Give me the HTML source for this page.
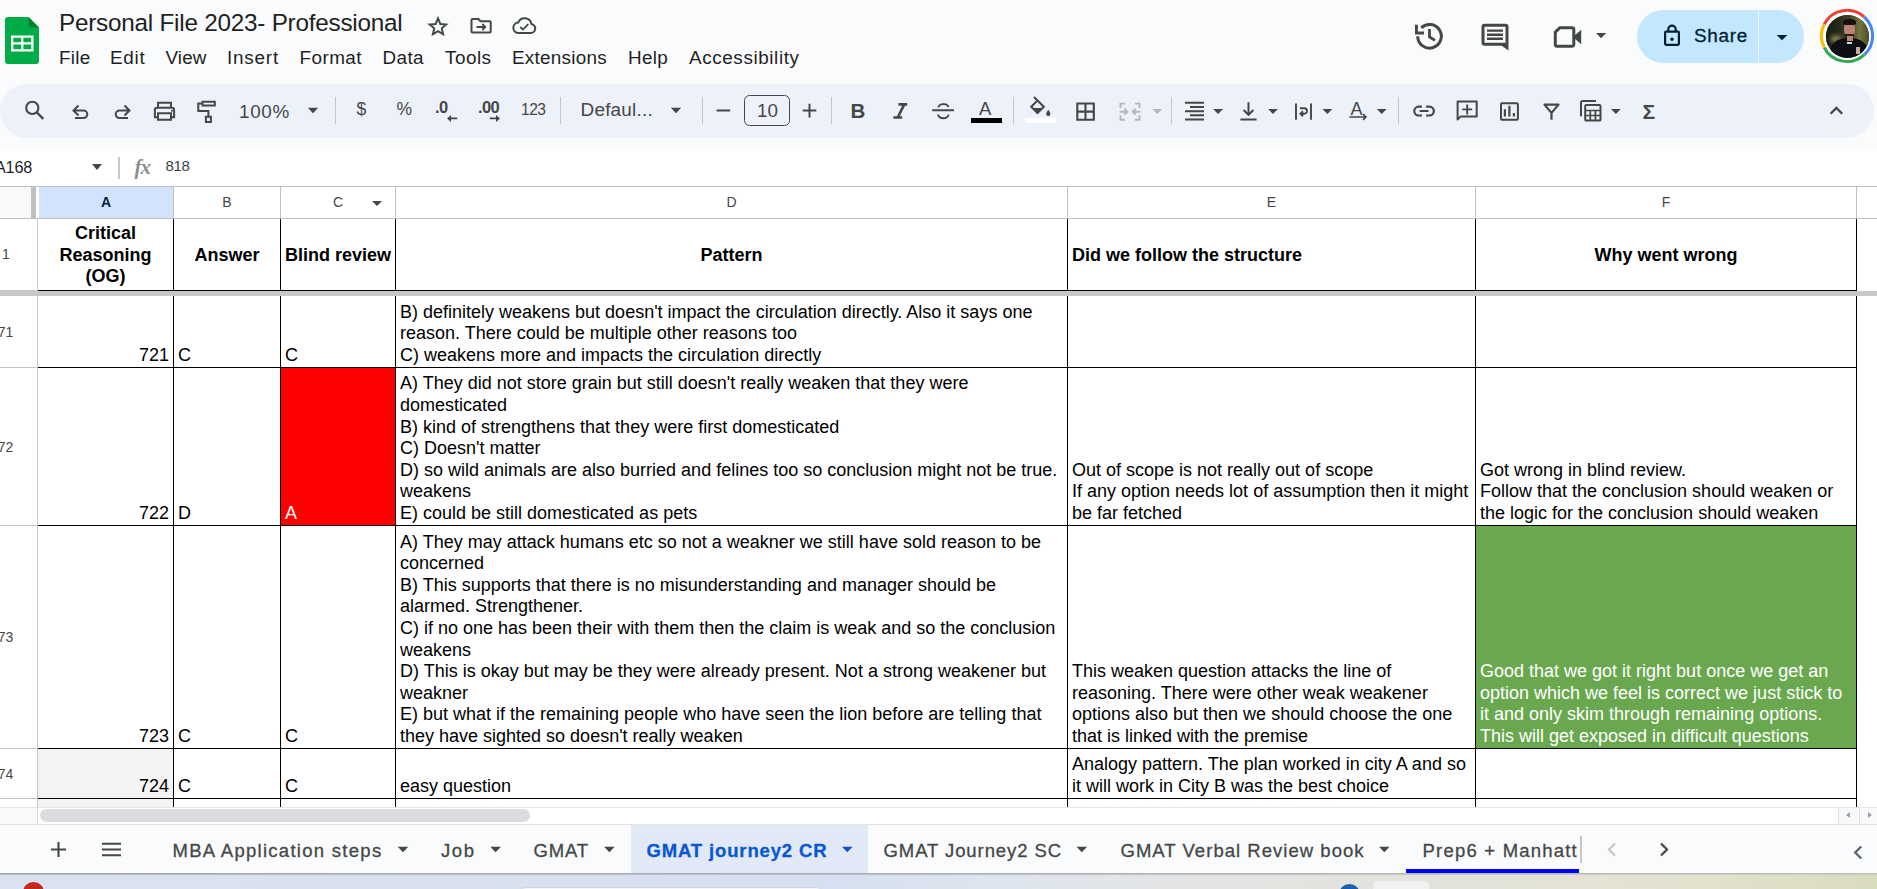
<!DOCTYPE html>
<html lang="en">
<head>
<meta charset="utf-8">
<title>Personal File 2023- Professional</title>
<style>
*{box-sizing:border-box}
html,body{margin:0;padding:0}
body{width:1877px;height:889px;overflow:hidden;position:relative;background:#f9fbfd;font-family:"Liberation Sans",sans-serif;color:#1f1f1f}
.abs{position:absolute}
.t{position:absolute;white-space:nowrap;line-height:1}
/* header */
#title{left:59px;top:9px;font-size:24.3px;letter-spacing:-.24px;color:#1f1f1f;line-height:28px}
.menu{top:47px;font-size:18.9px;line-height:22px;color:#1f1f1f}
svg.i{position:absolute;width:27px;height:27px;fill:#444746}
svg.s{position:absolute;fill:none;stroke:#444746}
/* toolbar */
#tb{left:0;top:84px;width:1874px;height:54px;border-radius:27px;background:#edf2fa}
.sep{position:absolute;top:97px;width:1px;height:27px;background:#c7c7c7}
.dd{position:absolute;width:0;height:0;border-left:5.5px solid transparent;border-right:5.5px solid transparent;border-top:6px solid #444746}
.tbt{color:#444746}
/* formula bar */
#fb{left:0;top:149px;width:1877px;height:37px;background:#fff}
/* grid */
#grid{left:0;width:1877px;overflow:visible}
.hl{position:absolute;height:1px;background:#000}
.vl{position:absolute;width:1px;background:#000}
.c{position:absolute;font-size:18px;line-height:21.6px;color:#000;white-space:pre;letter-spacing:0}
.ch{position:absolute;top:1px;height:31px;font-size:14px;line-height:30px;text-align:center;color:#444746;background:#fff}
.rh{position:absolute;left:0;font-size:14px;color:#444746;line-height:1;white-space:nowrap}
.hd{font-weight:bold;text-align:center}
/* tabs */
#tabs{left:0;top:826px;width:1877px;height:47px;background:#f9fbfd}
.tab{position:absolute;top:838.5px;font-size:18.5px;line-height:24px;color:#444746;white-space:nowrap;-webkit-text-stroke:.3px currentColor}
</style>
</head>
<body>

<!-- ===== HEADER ===== -->
<div id="hdr">
<svg class="abs" style="left:5px;top:17px" width="34" height="47" viewBox="0 0 34 47">
<path d="M3 0h20.5L34 10.5V44a3 3 0 0 1-3 3H3a3 3 0 0 1-3-3V3a3 3 0 0 1 3-3z" fill="#00ac47"/>
<path d="M23.5 0L34 10.5H26.500a3 3 0 0 1-3-3z" fill="#00832d"/>
<path fill="#fff" fill-rule="evenodd" d="M6 18.500h22.500v16H6zM8.300 20.800v4.500h7.800v-4.500zM18.400 20.800v4.500h7.800v-4.500zM8.300 27.600v4.600h7.800v-4.600zM18.400 27.600v4.600h7.800v-4.600z"/>
</svg>
<div class="t" id="title">Personal File 2023- Professional</div>
<div class="t menu" style="left:59px;letter-spacing:.26px">File</div>
<div class="t menu" style="left:110px;letter-spacing:.73px">Edit</div>
<div class="t menu" style="left:165.500px;letter-spacing:.1px">View</div>
<div class="t menu" style="left:227px;letter-spacing:.79px">Insert</div>
<div class="t menu" style="left:299.500px;letter-spacing:.45px">Format</div>
<div class="t menu" style="left:382.500px;letter-spacing:.4px">Data</div>
<div class="t menu" style="left:445px;letter-spacing:.48px">Tools</div>
<div class="t menu" style="left:512px;letter-spacing:.26px">Extensions</div>
<div class="t menu" style="left:628px;letter-spacing:.29px">Help</div>
<div class="t menu" style="left:689px;letter-spacing:.59px">Accessibility</div>
<!-- share pill -->
<div class="abs" style="left:1637px;top:10px;width:167px;height:53px;border-radius:26.500px;background:#c2e7ff"></div>
<div class="abs" style="left:1758px;top:10px;width:1px;height:53px;background:#eef7ff"></div>
<div class="t" style="left:1694px;top:24px;font-size:18.900px;line-height:24px;letter-spacing:.72px;color:#001d35;-webkit-text-stroke:.3px #001d35">Share</div>
<!-- avatar -->
<div class="abs" style="left:1826px;top:15px;width:43px;height:43px;border-radius:50%;overflow:hidden;background:#23281a">
<div class="abs" style="left:0;top:0;width:43px;height:30px;background:linear-gradient(90deg,#161a11 0,#262c1b 30%,#3f4226 55%,#76763f 78%,#4a4c2b 100%)"></div>
<div class="abs" style="left:4px;top:20px;width:12px;height:8px;border-radius:50%;background:#7d7a4a;filter:blur(2px)"></div>
<div class="abs" style="left:17.500px;top:6px;width:11.500px;height:15.500px;border-radius:45%;background:#b98478"></div>
<div class="abs" style="left:16.500px;top:3.500px;width:13.500px;height:6px;border-radius:50% 50% 25% 25%;background:#15110f"></div>
<div class="abs" style="left:19px;top:18.500px;width:8.500px;height:4px;border-radius:0 0 50% 50%;background:#2a1c18"></div>
<div class="abs" style="left:4px;top:22.500px;width:38px;height:30px;border-radius:45% 45% 0 0;background:#0e0e16"></div>
<div class="abs" style="left:20.500px;top:21px;width:6px;height:5px;background:#b98478"></div>
<div class="abs" style="left:21px;top:26.500px;width:5px;height:2.500px;background:#d8d8d8"></div>
<div class="abs" style="left:29.500px;top:32px;width:4px;height:6.500px;background:#c9a8a0"></div>
</div>
<svg class="abs" style="left:0;top:0" width="1877" height="84" viewBox="0 0 1877 84">
<g fill="none" stroke="#444746" stroke-width="2.200" stroke-linejoin="round">
<!-- star -->
<path transform="translate(438 26.300) scale(.9) translate(-438 -26.300)" d="M438 17.600l2.600 6.100 6.600.6-5 4.300 1.500 6.500-5.700-3.400-5.700 3.400 1.500-6.500-5-4.300 6.600-.6z" stroke-width="2.200" stroke-linejoin="miter"/>
<!-- folder move -->
<path d="M472.500 19h6l2 2.300h9.200a1 1 0 0 1 1 1v9.200a1 1 0 0 1-1 1h-17.200a1 1 0 0 1-1-1V20a1 1 0 0 1 1-1z" stroke-width="2"/>
<path d="M476.500 27h8.500M482.300 24l3 3-3 3" stroke-width="1.800" stroke-linejoin="miter"/>
<!-- cloud done -->
<path d="M518 33h12.800a4.500 4.500 0 0 0 .6-8.950 6.900 6.900 0 0 0-13.200-1.500A5.250 5.250 0 0 0 518 33z" stroke-width="2"/>
<path d="M520.300 27l2.600 2.600 5.400-5.400" stroke-width="1.800" stroke-linejoin="miter"/>
<!-- history -->
<path d="M1417.700 36.300a11.800 11.800 0 1 0 3.600-8.500" stroke-width="3"/>
<path d="M1429.500 29v8l5.500 3.400" stroke-width="2.800" stroke-linejoin="miter"/>
<!-- comment -->
<path d="M1484.500 25.300h21a1.500 1.500 0 0 1 1.500 1.500v17.500a0 0 0 0 1 0 0h-22.500a1.500 1.500 0 0 1-1.500-1.500v-16a1.500 1.500 0 0 1 1.500-1.500z" stroke-width="3"/>
<!-- video -->
<path d="M1560 27.700h12.200a1.600 1.600 0 0 1 1.600 1.600v15.300a1.600 1.600 0 0 1-1.600 1.600h-15.300a1.600 1.600 0 0 1-1.600-1.600V32.200z" stroke-width="3"/>
<!-- lock -->
<rect x="1665.100" y="31.600" width="13.800" height="13.200" rx="1" stroke="#001d35" stroke-width="2.200"/>
<path d="M1668.300 31.600v-2.200a3.700 3.700 0 0 1 7.400 0v2.200" stroke="#001d35" stroke-width="2.200"/>
</g>
<g fill="#444746">
<path d="M1415 24.700h2.900v6.900h6.100v2.900h-9z"/>
<path d="M1487 29.400h16v2.400h-16zM1487 33.500h16v2.400h-16zM1487 37.600h16v2.400h-16z"/>
<path d="M1500.500 45h8v5.500z"/>
<path d="M1574.500 35.500l6.700-5.700v14.400l-6.700-5.700z"/>
<path d="M1596 33h10.200l-5.100 5.200z"/>
<circle cx="1672" cy="39.200" r="1.700" fill="#001d35"/>
<path d="M1776.700 35h10.600l-5.300 5.200z" fill="#001d35"/>
</g>
<!-- avatar ring -->
<g fill="none" stroke-width="3">
<path d="M1824.2 24.2A25.6 25.6 0 0 1 1864.1 16.8" stroke="#ea4335"/>
<path d="M1864.1 16.8A25.6 25.6 0 0 1 1864.5 54.6" stroke="#4285f4"/>
<path d="M1864.5 54.6A25.6 25.6 0 0 1 1824.2 47.5" stroke="#34a853"/>
<path d="M1824.2 47.5A25.6 25.6 0 0 1 1824.2 24.2" stroke="#fbbc04"/>
</g>
</svg>
</div>

<!-- ===== TOOLBAR ===== -->
<div class="abs" id="tb"></div>
<div id="tbi">
<div class="sep" style="left:335px"></div>
<div class="sep" style="left:560px"></div>
<div class="sep" style="left:702px"></div>
<div class="sep" style="left:831px"></div>
<div class="sep" style="left:1013px"></div>
<div class="sep" style="left:1171px"></div>
<div class="sep" style="left:1398px"></div>
<div class="t tbt" style="left:239px;top:100px;font-size:18.900px;line-height:24px;letter-spacing:.67px">100%</div>
<div class="t tbt" style="left:356.500px;top:97px;font-size:17.500px;line-height:24px">$</div>
<div class="t tbt" style="left:396.500px;top:97px;font-size:17.500px;line-height:24px">%</div>
<div class="t tbt" style="left:435px;top:95px;font-size:16.500px;line-height:24px;font-weight:bold;letter-spacing:-.5px">.0</div>
<div class="t tbt" style="left:478px;top:95px;font-size:16.500px;line-height:24px;font-weight:bold;letter-spacing:-.6px">.00</div>
<div class="t tbt" style="left:521px;top:99px;font-size:15.600px;line-height:22px;letter-spacing:-.5px">123</div>
<div class="t tbt" style="left:580.500px;top:98px;font-size:18.900px;line-height:24px;letter-spacing:.24px">Defaul...</div>
<div class="abs" style="left:744px;top:95px;width:46px;height:31px;border:1.200px solid #444746;border-radius:5.500px"></div>
<div class="t tbt" style="left:757px;top:99px;font-size:18.900px;line-height:24px;color:#444746">10</div>
<div class="t tbt" style="left:850.500px;top:98px;font-size:20.500px;line-height:26px;font-weight:bold">B</div>
<div class="t tbt" style="left:979px;top:96.500px;font-size:18.500px;line-height:24px">A</div>
<div class="t tbt" style="left:1350.500px;top:97px;font-size:18px;line-height:24px">A</div>
<div class="t tbt" style="left:1642.500px;top:98.500px;font-size:21px;line-height:26px;font-weight:bold">&Sigma;</div>
<div class="abs" style="left:971px;top:118px;width:31px;height:5px;background:#000"></div>
<div class="abs" style="left:1025px;top:118px;width:31px;height:5px;background:#fff"></div>
<svg class="abs" style="left:0;top:84px" width="1877" height="54" viewBox="0 84 1877 54">
<g fill="none" stroke="#444746" stroke-width="2" stroke-linejoin="miter">
<!-- search -->
<circle cx="32.300" cy="107.900" r="6.100" stroke-width="2.100"/>
<path d="M36.700 112.300l6.600 6.600" stroke-width="2.300"/>
<!-- undo -->
<path d="M78.500 105.500l-5 5 5 5M74 110.500h9.500a3.800 3.800 0 0 1 0 7.600H75"/>
<!-- redo -->
<path d="M124.500 105.500l5 5-5 5M129 110.500h-9.500a3.800 3.800 0 0 0 0 7.600h8.500"/>
<!-- print -->
<path d="M158 107.500v-4.800h13v4.800M158 117.300h-3.100v-7.300a2.300 2.300 0 0 1 2.300-2.300h14.600a2.300 2.300 0 0 1 2.300 2.300v7.300h-3.100M158 113.300h13v6.500h-13z"/>
<!-- paint -->
<path d="M202.500 101.800h12.300v3.600h-12.300zM202.500 103.600h-4.200v7.300h10.100v5.500M205.900 116.800h5v5.200h-5z"/>
<!-- minus plus -->
<path d="M716.600 110.400h13.600M802.700 110.600h13.600M809.500 103.800v13.600"/>
<!-- italic -->
<path d="M898.500 104.400h8.700M893.400 117.500h8.700M904.300 104.400l-6.600 13.100" stroke-width="2.600"/>
<!-- strikethrough -->
<path d="M932.200 110.200h21.700M948.300 107.200a4.600 3.600 0 0 0-4.900-3.100 4.600 3.600 0 0 0-5 3.400M938.100 114.500a5.200 3.700 0 0 0 5.200 3.700 5.200 3.700 0 0 0 5.200-3.700" stroke-width="1.900"/>
<!-- fill bucket -->
<path d="M1034 97l9.800 9.800-6.300 6.300-6.300-6.300 6.300-6.300" stroke-width="2"/>
<!-- borders -->
<path d="M1077.300 103.500h16.500v16.300h-16.500zM1085.500 103.500v16.300M1077.300 111.600h16.500" stroke-width="2.100"/>
<!-- merge -->
<g stroke="#b4b7bc" stroke-width="1.900">
<path d="M1125 103.600h-4.500v4.500M1135 103.600h4.500v4.500M1125 119.800h-4.500v-4.500M1135 119.800h4.500v-4.500M1119.500 111.700h7.500M1124.300 108.800l3 2.900-3 2.900M1140.500 111.700h-7.500M1135.700 108.800l-3 2.900 3 2.900"/>
</g>
<!-- align right -->
<path d="M1185 102.700h19M1190 107h14M1185 111.200h19M1190 115.300h14M1185 119.500h19" stroke-width="1.900"/>
<!-- valign bottom -->
<path d="M1248.500 102.200v12.500M1243.600 110l4.900 4.900 4.900-4.900M1240.400 119.400h16.200"/>
<!-- wrap -->
<path d="M1296 103.600v16.200M1311 103.600v16.200M1300 108.300h4.300a2.700 2.700 0 0 1 0 5.400h-3.500M1303 111.200l-2.600 2.500 2.600 2.500" stroke-width="1.900"/>
<!-- rotate arrow -->
<path d="M1349.400 117h16M1363 114.200l2.900 2.800-2.900 2.800" stroke-width="1.700"/>
<!-- link -->
<path d="M1422 106.600h-3.300a4.450 4.450 0 0 0 0 8.900h3.300M1426.100 106.600h3.300a4.450 4.450 0 0 1 0 8.900h-3.300M1419.600 111h8.900" stroke-width="2.200"/>
<!-- comment plus -->
<path d="M1457.600 119.500v-18h19.100v15.100h-16.200z" stroke-linejoin="round"/>
<path d="M1462.200 109.400h10M1467.200 104.400v10" stroke-width="1.900"/>
<!-- chart -->
<rect x="1501" y="103.200" width="16.900" height="16.600" rx="1"/>
<path d="M1504.900 109.300v7.200M1509.400 105.700v10.800M1513.900 113v3.500" stroke-width="2.200"/>
<!-- filter -->
<path d="M1544.500 104.600h14l-7 8.300zM1551.500 111v8.800" stroke-width="2.200" stroke-linejoin="round"/>
<!-- table views -->
<path d="M1581 116.300v-13.600a1.600 1.600 0 0 1 1.600-1.600h13.400" />
<rect x="1585.200" y="104.900" width="15.300" height="15.700" rx="1.200"/>
<path d="M1585.200 110.500h15.300M1585.200 115.500h15.300M1590.300 110.500v10M1595.400 110.500v10" stroke-width="1.700"/>
<!-- chevron up -->
<path d="M1830.600 113.800l5.800-5.800 5.800 5.800" stroke-width="2.300"/>
</g>
<g fill="#444746">
<circle cx="172" cy="110.800" r="1"/>
<path d="M1032.400 108h10.300l-5.200 5.100z"/>
<path d="M1048.300 109.800c1.300 1.900 2.100 3.100 2.100 4.100a2.100 2.100 0 0 1-4.200 0c0-1 .8-2.200 2.100-4.100z"/>
<!-- dropdown arrows -->
<path d="M307.800 107.800h10.400l-5.200 5.400z"/>
<path d="M670.800 107.800h10.400l-5.200 5.400z"/>
<path d="M1152.400 109h9.800l-4.900 5z" fill="#b4b7bc"/>
<path d="M1213.200 109h9.800l-4.900 5z"/>
<path d="M1268.100 109h9.800l-4.900 5z"/>
<path d="M1322.500 109h9.800l-4.900 5z"/>
<path d="M1376.900 109h9.800l-4.900 5z"/>
<path d="M1611 109h9.800l-4.900 5z"/>
<!-- .0 arrows -->
<path d="M447 118.400l4-3.500v2.600h6.200v1.800h-6.200v2.600z"/>
<path d="M500 118.400l-4-3.500v2.600h-6.200v1.800h6.200v2.600z"/>
</g>
</svg>
</div>

<!-- ===== FORMULA BAR ===== -->
<div class="abs" id="fb"></div>
<div class="t" style="left:-5px;top:155.500px;font-size:16.200px;line-height:22px;letter-spacing:-.2px;color:#1f1f1f">A168</div>
<div class="dd" style="left:92.400px;top:164px;border-left-width:5px;border-right-width:5px;border-top-width:6px"></div>
<div class="abs" style="left:118px;top:157px;width:2px;height:21.500px;background:#c7c7c7"></div>
<div class="t" style="left:134.500px;top:154px;font-family:'Liberation Serif',serif;font-style:italic;font-size:21px;line-height:26px;color:#8c8f94;letter-spacing:-1px;font-weight:bold">fx</div>
<div class="t" style="left:165.500px;top:156px;font-size:15px;line-height:20px;letter-spacing:-.34px;color:#3c4043">818</div>

<!-- ===== GRID ===== -->
<div class="abs" id="grid" style="top:0;height:806px;background:none">
<div class="abs" style="left:0;top:186px;width:1877px;height:621px;background:#fff"></div>
<!-- column header -->
<div class="abs" style="left:0;top:187px;width:31px;height:31px;background:#f8f9fa"></div>
<div class="abs" style="left:31px;top:187px;width:5px;height:31px;background:#c0c0c0"></div>
<div class="ch" style="left:39px;top:187px;width:134px;background:#d3e3fd;color:#041e49;font-weight:bold">A</div>
<div class="ch" style="left:174px;top:187px;width:106px">B</div>
<div class="ch" style="left:281px;top:187px;width:114px">C</div>
<div class="ch" style="left:396px;top:187px;width:671px">D</div>
<div class="ch" style="left:1068px;top:187px;width:407px">E</div>
<div class="ch" style="left:1476px;top:187px;width:380px">F</div>
<div class="dd" style="left:371.5px;top:200.5px;border-left-width:5px;border-right-width:5px;border-top-width:5.5px"></div>
<div class="abs" style="left:0;top:186px;width:1877px;height:1px;background:#c0c0c0"></div>
<div class="abs" style="left:0;top:218px;width:1877px;height:1px;background:#c0c0c0"></div>
<div class="abs" style="left:173px;top:187px;width:1px;height:31px;background:#c0c0c0"></div>
<div class="abs" style="left:280px;top:187px;width:1px;height:31px;background:#c0c0c0"></div>
<div class="abs" style="left:395px;top:187px;width:1px;height:31px;background:#c0c0c0"></div>
<div class="abs" style="left:1067px;top:187px;width:1px;height:31px;background:#c0c0c0"></div>
<div class="abs" style="left:1475px;top:187px;width:1px;height:31px;background:#c0c0c0"></div>
<div class="abs" style="left:1856px;top:187px;width:1px;height:31px;background:#c0c0c0"></div>
<!-- row header -->
<div class="abs" style="left:37px;top:219px;width:1px;height:588px;background:#c4c4c4"></div>
<div class="abs" style="left:0;top:367px;width:37px;height:1px;background:#c4c4c4"></div>
<div class="abs" style="left:0;top:525px;width:37px;height:1px;background:#c4c4c4"></div>
<div class="abs" style="left:0;top:748px;width:37px;height:1px;background:#c4c4c4"></div>
<div class="abs" style="left:0;top:798px;width:37px;height:1px;background:#c4c4c4"></div>
<div class="rh" style="left:2px;top:247px">1</div>
<div class="rh" style="left:-10px;top:325px">171</div>
<div class="rh" style="left:-10px;top:440px">172</div>
<div class="rh" style="left:-10px;top:630px">173</div>
<div class="rh" style="left:-10px;top:767px">174</div>
<!-- fills -->
<div class="abs" style="left:281px;top:368px;width:114px;height:157px;background:#ff0000"></div>
<div class="abs" style="left:1476px;top:526px;width:380px;height:222px;background:#6aa84f"></div>
<div class="abs" style="left:38px;top:749px;width:135px;height:58px;background:#f3f3f3"></div>
<!-- black borders -->
<div class="hl" style="left:38px;top:290px;width:1819px"></div>
<div class="hl" style="left:38px;top:367px;width:1819px"></div>
<div class="hl" style="left:38px;top:525px;width:1819px"></div>
<div class="hl" style="left:38px;top:748px;width:1819px"></div>
<div class="hl" style="left:38px;top:798px;width:1819px"></div>
<div class="vl" style="left:173px;top:219px;height:588px"></div>
<div class="vl" style="left:280px;top:219px;height:588px"></div>
<div class="vl" style="left:395px;top:219px;height:588px"></div>
<div class="vl" style="left:1067px;top:219px;height:588px"></div>
<div class="vl" style="left:1475px;top:219px;height:588px"></div>
<div class="vl" style="left:1856px;top:219px;height:588px"></div>
<!-- freeze bar -->
<div class="abs" style="left:0;top:291px;width:1877px;height:5px;background:#c8c8c8"></div>
<div class="abs" style="left:0;top:290px;width:38px;height:1px;background:#c8c8c8"></div>
<!-- header row text -->
<div class="c hd" style="left:38px;width:135px;top:223.1px">Critical
Reasoning
(OG)</div>
<div class="c hd" style="left:174px;width:106px;top:244.7px">Answer</div>
<div class="c hd" style="left:281px;width:114px;top:244.7px">Blind review</div>
<div class="c hd" style="left:396px;width:671px;top:244.7px">Pattern</div>
<div class="c hd" style="left:1072px;top:244.7px;text-align:left">Did we follow the structure</div>
<div class="c hd" style="left:1476px;width:380px;top:244.7px">Why went wrong</div>
<!-- row 171 -->
<div class="c" style="right:1708px;bottom:439.4px">721</div>
<div class="c" style="left:178px;bottom:439.4px">C</div>
<div class="c" style="left:285px;bottom:439.4px">C</div>
<div class="c" style="left:400px;bottom:439.4px">B) definitely weakens but doesn't impact the circulation directly. Also it says one
reason. There could be multiple other reasons too
C) weakens more and impacts the circulation directly</div>
<!-- row 172 -->
<div class="c" style="right:1708px;bottom:281.4px">722</div>
<div class="c" style="left:178px;bottom:281.4px">D</div>
<div class="c" style="left:285px;bottom:281.4px;color:#fff">A</div>
<div class="c" style="left:400px;bottom:281.4px">A) They did not store grain but still doesn't really weaken that they were
domesticated
B) kind of strengthens that they were first domesticated
C) Doesn't matter
D) so wild animals are also burried and felines too so conclusion might not be true.
weakens
E) could be still domesticated as pets</div>
<div class="c" style="left:1072px;bottom:281.4px">Out of scope is not really out of scope
If any option needs lot of assumption then it might
be far fetched</div>
<div class="c" style="left:1480px;bottom:281.4px">Got wrong in blind review.
Follow that the conclusion should weaken or
the logic for the conclusion should weaken</div>
<!-- row 173 -->
<div class="c" style="right:1708px;bottom:58.4px">723</div>
<div class="c" style="left:178px;bottom:58.4px">C</div>
<div class="c" style="left:285px;bottom:58.4px">C</div>
<div class="c" style="left:400px;bottom:58.4px">A) They may attack humans etc so not a weakner we still have sold reason to be
concerned
B) This supports that there is no misunderstanding and manager should be
alarmed. Strengthener.
C) if no one has been their with them then the claim is weak and so the conclusion
weakens
D) This is okay but may be they were already present. Not a strong weakener but
weakner
E) but what if the remaining people who have seen the lion before are telling that
they have sighted so doesn't really weaken</div>
<div class="c" style="left:1072px;bottom:58.4px">This weaken question attacks the line of
reasoning. There were other weak weakener
options also but then we should choose the one
that is linked with the premise</div>
<div class="c" style="left:1480px;bottom:58.4px;color:#fff">Good that we got it right but once we get an
option which we feel is correct we just stick to
it and only skim through remaining options.
This will get exposed in difficult questions</div>
<!-- row 174 -->
<div class="c" style="right:1708px;bottom:8.4px">724</div>
<div class="c" style="left:178px;bottom:8.4px">C</div>
<div class="c" style="left:285px;bottom:8.4px">C</div>
<div class="c" style="left:400px;bottom:8.4px">easy question</div>
<div class="c" style="left:1072px;bottom:8.4px">Analogy pattern. The plan worked in city A and so
it will work in City B was the best choice</div>
</div>

<!-- ===== SCROLLBAR ===== -->
<div id="sb">
<div class="abs" style="left:0;top:807px;width:1877px;height:18px;background:#fff"></div>
<div class="abs" style="left:0;top:807px;width:1877px;height:1px;background:#e6e6e6"></div>
<div class="abs" style="left:0;top:808px;width:37px;height:16px;background:#f8f9fa"></div>
<div class="abs" style="left:37px;top:807px;width:1px;height:17px;background:#d9d9d9"></div>
<div class="abs" style="left:40px;top:809px;width:489.500px;height:13px;border-radius:6.500px;background:#dadce0"></div>
<div class="abs" style="left:1838px;top:808px;width:39px;height:16px;background:#f8f9fa;border-left:1px solid #e0e0e0"></div>
<div class="abs" style="left:1859px;top:808px;width:1px;height:16px;background:#e0e0e0"></div>
<div class="abs" style="left:1845.500px;top:812px;width:0;height:0;border-top:3.500px solid transparent;border-bottom:3.500px solid transparent;border-right:4.500px solid #9aa0a6"></div>
<div class="abs" style="left:1868px;top:812px;width:0;height:0;border-top:3.500px solid transparent;border-bottom:3.500px solid transparent;border-left:4.500px solid #9aa0a6"></div>
<div class="abs" style="left:0;top:824px;width:1877px;height:1px;background:#e3e3e3"></div>
</div>

<!-- ===== SHEET TABS ===== -->
<div class="abs" id="tabs" style="top:825px;height:48px"></div>
<div class="abs" style="left:631px;top:825px;width:237px;height:48px;background:#e1e9f7"></div>
<div class="tab" style="left:172.500px;letter-spacing:1.28px">MBA Application steps</div>
<div class="tab" style="left:441px;letter-spacing:1.56px">Job</div>
<div class="tab" style="left:533.500px;letter-spacing:.86px">GMAT</div>
<div class="tab" style="left:646.500px;letter-spacing:.86px;font-weight:bold;color:#0b57d0">GMAT journey2 CR</div>
<div class="tab" style="left:883.500px;letter-spacing:.92px">GMAT Journey2 SC</div>
<div class="tab" style="left:1120.500px;letter-spacing:1.03px">GMAT Verbal Review book</div>
<div class="tab" style="left:1422.500px;letter-spacing:1.21px">Prep6 + Manhatt</div>
<div class="abs" style="left:1406px;top:868.500px;width:173px;height:4.500px;background:#0000ff"></div>
<div class="abs" style="left:1580px;top:836px;width:2px;height:27px;background:#c6c6c6"></div>
<svg class="abs" style="left:0;top:825px" width="1877" height="48" viewBox="0 825 1877 48">
<g fill="none" stroke="#444746" stroke-width="2">
<path d="M51 849.500h15M58.500 842v15" stroke-width="2.100"/>
<path d="M102 843.700h19M102 849.500h19M102 855.300h19" stroke-width="2"/>
<path d="M1615 843.500l-6 6 6 6" stroke="#c4c7c5" stroke-width="2.200"/>
<path d="M1661 843.500l6 6-6 6" stroke-width="2.200"/>
<path d="M1861.200 846.500l-6 6 6 6" stroke="#5f6368" stroke-width="2.300"/>
</g>
<g fill="#444746">
<path d="M397.700 846.800h10.600l-5.300 5.500z"/>
<path d="M490.300 846.800h10.600l-5.300 5.500z"/>
<path d="M604.100 846.800h10.600l-5.300 5.500z"/>
<path d="M842 846.800h10.600l-5.300 5.500z" fill="#0b57d0"/>
<path d="M1076.500 846.800h10.600l-5.300 5.500z"/>
<path d="M1379 846.800h10.600l-5.300 5.500z"/>
</g>
</svg>

<!-- ===== TASKBAR STRIP ===== -->
<div id="task">
<div class="abs" style="left:0;top:873px;width:1877px;height:16px;background:linear-gradient(90deg,#dbe2ef 0,#d9e1ef 25%,#d7e0f0 45%,#e0e6ee 55%,#e4e4e4 64%,#e3e2dc 75%,#e4e3d2 88%,#dadcc0 100%)"></div>
<div class="abs" style="left:0;top:873px;width:1877px;height:1px;background:linear-gradient(90deg,#a6abb3 0,#adb1b8 50%,#b9bab6 80%,#bfc0b6 100%)"></div>
<div class="abs" style="left:0;top:874px;width:1877px;height:1px;background:linear-gradient(90deg,#b4bac5 0,#bbc0c8 50%,#c8c9c4 80%,#cccdbf 100%)"></div>
<div class="abs" style="left:22.500px;top:882.400px;width:21.500px;height:21.500px;border-radius:50%;background:#c5281c"></div>
<div class="abs" style="left:516px;top:886.500px;width:310px;height:20px;border-radius:10px;background:#f3f5f9;border:1px solid #cfd5e0"></div>
<div class="abs" style="left:1338.500px;top:883.600px;width:21px;height:21px;border-radius:50%;background:#1a5fa8"></div>
<div class="abs" style="left:1373px;top:880.700px;width:56px;height:20px;border-radius:5px;background:#f1f1f1"></div>
</div>

</body>
</html>
